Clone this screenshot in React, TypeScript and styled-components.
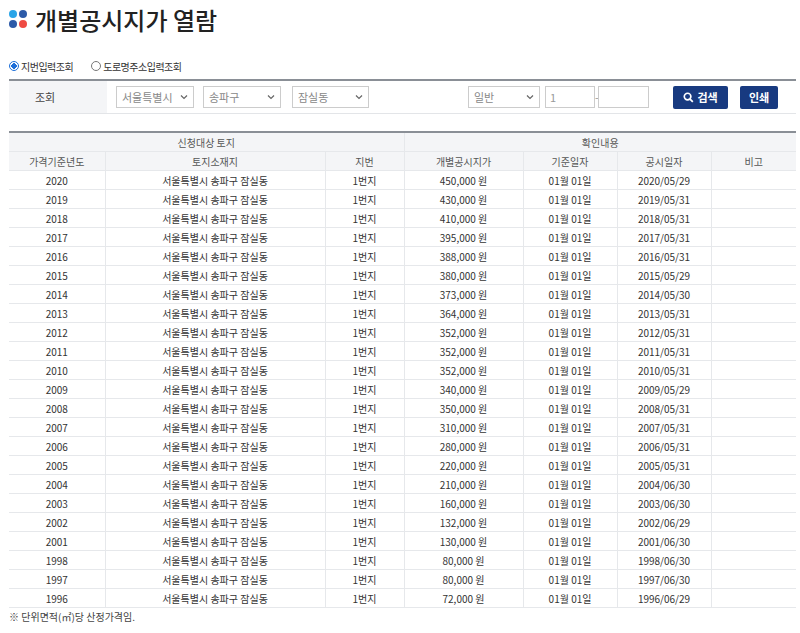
import React from "react";
import styled, { createGlobalStyle } from "styled-components";

const G = createGlobalStyle`
  body { margin: 0; background: #fff; font-family: "Noto Sans CJK KR", "Noto Sans", sans-serif; color: #333; }
`;
const Page = styled.div`padding: 0 4px 0 9px; width: 787px;`;
const Title = styled.h1`
  margin: 0; height: 38px; display: flex; align-items: center; gap: 8px;
  font-size: 24px; font-weight: 500; color: #222; padding-top: 0px;
`;
const Dots = styled.span`display: grid; grid-template-columns: 8px 8px; gap: 2px;`;
const Dot = styled.i<{ c: string }>`width: 8px; height: 8px; border-radius: 50%; background: ${p => p.c};`;
const Radios = styled.div`display: flex; gap: 18px; margin-top: 19px; height: 18px; align-items: center; font-size: 10px; letter-spacing: -0.5px;`;
const Radio = styled.label<{ on?: boolean }>`
  display: flex; align-items: center; gap: 2px;
  &::before { content: ""; width: 8px; height: 8px; border-radius: 50%;
    border: 1px solid ${p => (p.on ? "#1e6fd9" : "#777")};
    background: ${p => (p.on ? "radial-gradient(#1e6fd9 45%, #fff 50%)" : "#fff")}; }
`;
const Search = styled.div`
  margin-top: 4px; border-top: 2px solid #8a8f96; border-bottom: 1px solid #e3e5e8;
  display: flex; height: 32px; font-size: 11px;
`;
const Label = styled.div`width: 98px; background: #f4f5f7; display: flex; align-items: center; padding-left: 26px; box-sizing: border-box; color: #444;`;
const Controls = styled.div`flex: 1; display: flex; align-items: center; padding-left: 9px;`;
const Sel = styled.div<{ w: number; ml: number }>`
  width: ${p => p.w}px; margin-left: ${p => p.ml}px; height: 22px; box-sizing: border-box;
  border: 1px solid #ccc; display: flex; align-items: center; justify-content: space-between;
  padding: 0 5px; color: #888; font-size: 11px;
`;
const Input = styled.div<{ w: number; ml: number }>`
  width: ${p => p.w}px; margin-left: ${p => p.ml}px; height: 22px; box-sizing: border-box;
  border: 1px solid #ccc; padding-left: 4px; display: flex; align-items: center; color: #999;
`;
const Btn = styled.div<{ w: number; ml: number }>`
  width: ${p => p.w}px; margin-left: ${p => p.ml}px; height: 23px; border-radius: 2px;
  background: #183a80; color: #fff; font-weight: 700; font-size: 11px;
  display: flex; align-items: center; justify-content: center; gap: 3px;
`;
const Table = styled.table`
  margin-top: 17px; width: 787px; border-collapse: collapse; border-top: 2px solid #8a8f96;
  font-size: 10px; table-layout: fixed;
  th { background: #f4f5f7; font-weight: 400; color: #555; height: 18px; border: 1px solid #e6e8eb; border-top: 0; padding: 0; }
  td { height: 18px; border: 1px solid #e6e8eb; text-align: center; padding: 0; color: #333; }
  th:first-child, td:first-child { border-left: 0; }
  th:last-child, td:last-child { border-right: 0; }
`;
const Note = styled.div`font-size: 10px; color: #444; margin-top: 1px;`;

const Chev = () => (
  <svg width="8" height="6" viewBox="0 0 8 6"><path d="M1 1.5l3 3 3-3" stroke="#666" strokeWidth="1.2" fill="none" /></svg>
);

const data: [string, string, string][] = [
  ["2020","450,000","2020/05/29"],["2019","430,000","2019/05/31"],["2018","410,000","2018/05/31"],
  ["2017","395,000","2017/05/31"],["2016","388,000","2016/05/31"],["2015","380,000","2015/05/29"],
  ["2014","373,000","2014/05/30"],["2013","364,000","2013/05/31"],["2012","352,000","2012/05/31"],
  ["2011","352,000","2011/05/31"],["2010","352,000","2010/05/31"],["2009","340,000","2009/05/29"],
  ["2008","350,000","2008/05/31"],["2007","310,000","2007/05/31"],["2006","280,000","2006/05/31"],
  ["2005","220,000","2005/05/31"],["2004","210,000","2004/06/30"],["2003","160,000","2003/06/30"],
  ["2002","132,000","2002/06/29"],["2001","130,000","2001/06/30"],["1998","80,000","1998/06/30"],
  ["1997","80,000","1997/06/30"],["1996","72,000","1996/06/29"],
];

export default function App() {
  return (
    <Page>
      <G />
      <Title>
        <Dots><Dot c="#2aa5e8" /><Dot c="#2c5aa8" /><Dot c="#2c5aa8" /><Dot c="#ef4b43" /></Dots>
        개별공시지가 열람
      </Title>
      <Radios>
        <Radio on>지번입력조회</Radio>
        <Radio>도로명주소입력조회</Radio>
      </Radios>
      <Search>
        <Label>조회</Label>
        <Controls>
          <Sel w={78} ml={0}>서울특별시 <Chev /></Sel>
          <Sel w={78} ml={9}>송파구 <Chev /></Sel>
          <Sel w={77} ml={11}>잠실동 <Chev /></Sel>
          <Sel w={72} ml={99}>일반 <Chev /></Sel>
          <Input w={50} ml={5}>1</Input>
          <span style={{ width: 3, color: "#999" }}>-</span>
          <Input w={51} ml={0}></Input>
          <Btn w={55} ml={24}>
            <svg width="11" height="11" viewBox="0 0 12 12"><circle cx="5" cy="5" r="3.6" stroke="#fff" strokeWidth="1.8" fill="none" /><path d="M7.7 7.7l3 3" stroke="#fff" strokeWidth="2" /></svg>
            검색
          </Btn>
          <Btn w={38} ml={12}>인쇄</Btn>
        </Controls>
      </Search>
      <Table>
        <colgroup>
          <col style={{ width: 96 }} /><col style={{ width: 220 }} /><col style={{ width: 79 }} />
          <col style={{ width: 119 }} /><col style={{ width: 94 }} /><col style={{ width: 94 }} /><col />
        </colgroup>
        <thead>
          <tr><th colSpan={3}>신청대상 토지</th><th colSpan={4}>확인내용</th></tr>
          <tr><th>가격기준년도</th><th>토지소재지</th><th>지번</th><th>개별공시지가</th><th>기준일자</th><th>공시일자</th><th>비고</th></tr>
        </thead>
        <tbody>
          {data.map(([y, p, d]) => (
            <tr key={y}><td>{y}</td><td>서울특별시 송파구 잠실동</td><td>1번지</td><td>{p} 원</td><td>01월 01일</td><td>{d}</td><td></td></tr>
          ))}
        </tbody>
      </Table>
      <Note>※ 단위면적(㎡)당 산정가격임.</Note>
    </Page>
  );
}
